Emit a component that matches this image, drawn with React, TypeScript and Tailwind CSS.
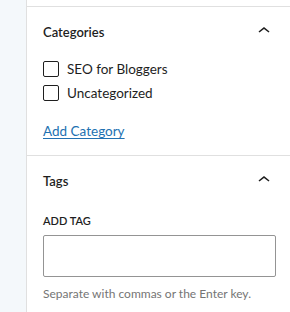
import React from "react";

const categories = ["SEO for Bloggers", "Uncategorized"];

function ChevronUp() {
  return (
    <svg width="24" height="24" viewBox="0 0 24 24" className="fill-[#1e1e1e]">
      <path d="M6.5 12.4L12 8l5.5 4.4-.9 1.2L12 10l-4.5 3.6-1-1.2z" />
    </svg>
  );
}

function PanelHeader({ title }: { title: string }) {
  return (
    <div className="flex h-[48px] items-center justify-between">
      <h2 className="pt-[2px] text-[13px] font-semibold leading-[20px] text-[#1e1e1e]">{title}</h2>
      <ChevronUp />
    </div>
  );
}

export default function App() {
  return (
    <div
      className="flex h-[312px] w-[290px] overflow-hidden bg-white"
      style={{ fontFamily: 'Lato, "Noto Sans", sans-serif' }}
    >
      <div className="w-[27px] shrink-0 border-r border-[#e0e0e0] bg-[#f4f8fb]" />
      <div className="flex-1">
        <div className="h-[7px] border-b border-[#e0e0e0]" />

        {/* Categories */}
        <section className="border-b border-[#e0e0e0] pl-[16px] pr-[14px]">
          <PanelHeader title="Categories" />
          <ul className="pt-[2px]">
            {categories.map((c) => (
              <li key={c} className="flex h-[24px] items-center gap-[8px]">
                <span className="h-[16px] w-[16px] rounded-[2px] border border-[#1e1e1e] bg-white" />
                <span className="text-[13.5px] leading-[20px] text-[#1e1e1e]">{c}</span>
              </li>
            ))}
          </ul>
          <a
            href="#"
            className="block pb-[14px] pt-[16px] text-[13.5px] leading-[20px] text-[#2271b1] underline underline-offset-[2px]"
          >
            Add Category
          </a>
        </section>

        {/* Tags */}
        <section className="pl-[16px] pr-[14px]">
          <PanelHeader title="Tags" />
          <div className="pt-[9px]">
            <label className="block text-[11px] font-semibold uppercase leading-[16px] text-[#1e1e1e]">
              Add Tag
            </label>
            <div className="mt-[6px] h-[42px] w-full rounded-[2px] border border-[#949494] bg-white" />
            <p className="mt-[9px] text-[12px] leading-[16px] text-[#757575]">
              Separate with commas or the Enter key.
            </p>
          </div>
        </section>
      </div>
    </div>
  );
}
